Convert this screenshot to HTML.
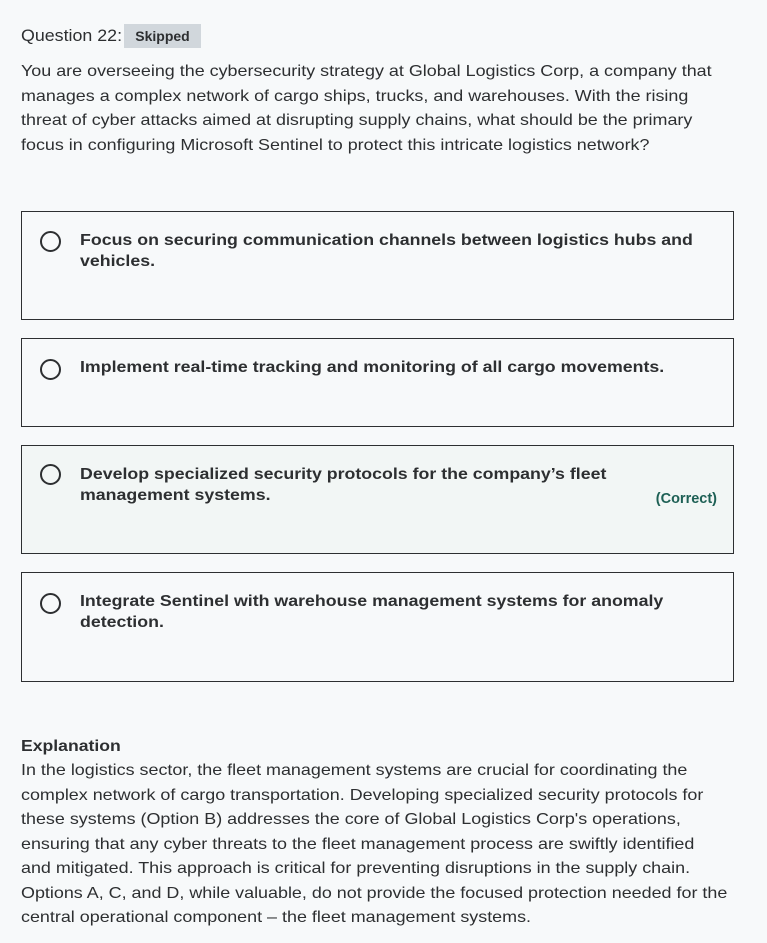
<!DOCTYPE html>
<html><head><meta charset="utf-8"><style>
body{margin:0;background:#f7f9fa;color:#2d2f31;font-family:"Liberation Sans",sans-serif;width:767px;height:943px;overflow:hidden;position:relative}
.s{display:inline-block;transform-origin:0 0}
.q{position:absolute;left:21px;top:24px;font-size:16.5px;line-height:24px}
.badge{position:absolute;left:124px;top:24px;width:77px;height:24px;background:#d1d7dc;font-weight:bold;font-size:14px;line-height:24px;text-align:center}
.p{position:absolute;left:21px;font-size:16px;line-height:24.5px;white-space:nowrap;transform-origin:0 0}
.box{position:absolute;left:21px;width:713px;border:1px solid #2d2f31;box-sizing:border-box}
.box .r{position:absolute;left:18px;width:21px;height:21px;border:2px solid #2d2f31;border-radius:50%;box-sizing:border-box}
.box .t{position:absolute;left:58px;font-weight:bold;font-size:16px;line-height:21px;white-space:nowrap;transform:scaleX(1.11);transform-origin:0 0}
.c{position:absolute;right:16px;top:45px;font-weight:bold;font-size:14.5px;color:#1e6055}
</style></head><body>
<div class="q"><span class="s" style="transform:scaleX(1.08)">Question 22:</span></div>
<div class="badge">Skipped</div>
<div class="p" style="top:60px;transform:scaleX(1.12)">You are overseeing the cybersecurity strategy at Global Logistics Corp, a company that<br>manages a complex network of cargo ships, trucks, and warehouses. With the rising<br>threat of cyber attacks aimed at disrupting supply chains, what should be the primary<br>focus in configuring Microsoft Sentinel to protect this intricate logistics network?</div>
<div class="box" style="top:211px;height:109px"><div class="r" style="top:19px"></div><div class="t" style="top:18px">Focus on securing communication channels between logistics hubs and<br>vehicles.</div></div>
<div class="box" style="top:338px;height:89px"><div class="r" style="top:20px"></div><div class="t" style="top:18px">Implement real-time tracking and monitoring of all cargo movements.</div></div>
<div class="box" style="top:445px;height:109px;background:#f2f6f5"><div class="r" style="top:18px"></div><div class="t" style="top:18px">Develop specialized security protocols for the company’s fleet<br>management systems.</div><div class="c">(Correct)</div></div>
<div class="box" style="top:572px;height:110px"><div class="r" style="top:20px"></div><div class="t" style="top:18px">Integrate Sentinel with warehouse management systems for anomaly<br>detection.</div></div>
<div class="p" style="top:735px;font-weight:bold;transform:scaleX(1.1)">Explanation</div>
<div class="p" style="top:759px;transform:scaleX(1.12)">In the logistics sector, the fleet management systems are crucial for coordinating the<br>complex network of cargo transportation. Developing specialized security protocols for<br>these systems (Option B) addresses the core of Global Logistics Corp's operations,<br>ensuring that any cyber threats to the fleet management process are swiftly identified<br>and mitigated. This approach is critical for preventing disruptions in the supply chain.<br>Options A, C, and D, while valuable, do not provide the focused protection needed for the<br>central operational component – the fleet management systems.</div>
</body></html>
